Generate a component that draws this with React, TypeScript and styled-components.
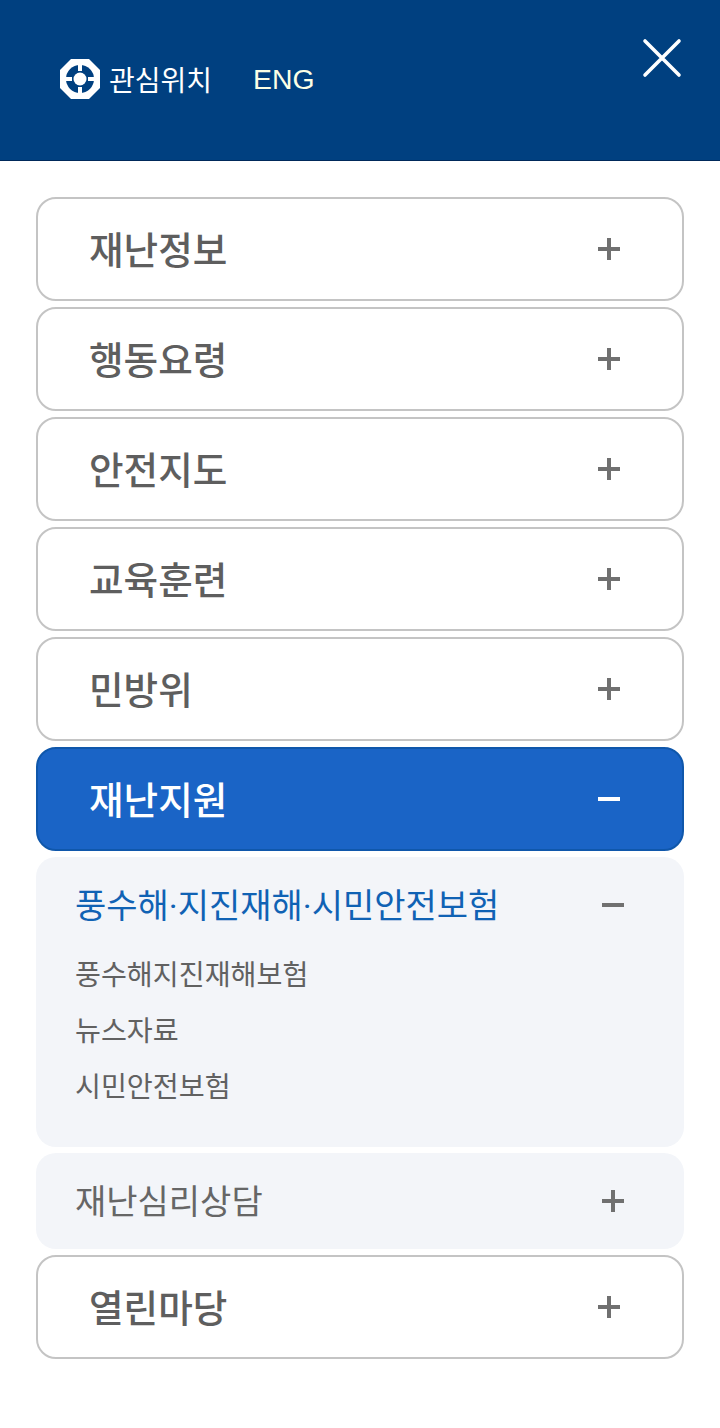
import styled, { createGlobalStyle } from 'styled-components';

const GlobalStyle = createGlobalStyle`
  html, body {
    margin: 0;
    padding: 0;
    background: #fff;
    font-family: 'Roboto', 'Noto Sans CJK KR', sans-serif;
  }
  * {
    box-sizing: border-box;
  }
`;

const Page = styled.div`
  width: 720px;
  height: 1428px;
  background: #fff;
`;

const Header = styled.header`
  height: 161px;
  background: #004080;
  border-bottom: 1px solid #00295a;
  display: flex;
  justify-content: space-between;
  align-items: flex-start;
  padding: 38px 38px 0 59px;
`;

const HeaderLinks = styled.div`
  display: flex;
  align-items: center;
  height: 44px;
  margin-top: 19px;
  color: #fff;
`;

const WatchLink = styled.a`
  display: flex;
  align-items: center;
  gap: 8px;
  font-size: 28px;
`;

const LangLink = styled.a`
  margin-left: 41px;
  font-family: 'Liberation Sans', sans-serif;
  font-size: 28.4px;
  color: #fbffe6;
`;

const CloseButton = styled.button`
  width: 40px;
  height: 40px;
  padding: 0;
  border: 0;
  background: none;
  display: block;
`;

const Menu = styled.nav`
  display: flex;
  flex-direction: column;
  gap: 6px;
  padding: 36px 36px 0;
`;

const MenuButton = styled.div<{ $active?: boolean }>`
  height: 104px;
  display: flex;
  align-items: center;
  justify-content: space-between;
  padding: 0 62px 4px 51px;
  border-radius: 20px;
  border: 2px solid ${({ $active }) => ($active ? '#0f57ab' : '#c4c4c4')};
  background: ${({ $active }) => ($active ? '#1a64c6' : '#fff')};
  color: ${({ $active }) => ($active ? '#fff' : '#5e5e5e')};
  font-size: 37.6px;
  font-weight: 500;
`;

const SubPanel = styled.div`
  background: #f3f5f9;
  border-radius: 20px;
  padding: 0 60px 0 39px;
`;

const SubHead = styled.div<{ $open?: boolean }>`
  display: flex;
  align-items: center;
  justify-content: space-between;
  height: 96px;
  padding-bottom: 4px;
  font-size: 34px;
  color: ${({ $open }) => ($open ? '#1062b4' : '#666')};
`;

const SubList = styled.ul`
  list-style: none;
  margin: 0;
  padding: 3px 0 39px;
  display: flex;
  flex-direction: column;
  gap: 16px;
`;

const SubItem = styled.li`
  height: 40px;
  line-height: 40px;
  font-size: 28.2px;
  color: #616161;
`;

const SignIcon = styled.svg`
  width: 22px;
  height: 22px;
  flex: none;
  display: block;
  margin-bottom: -4px;
`;

function Sign({ open, color }: { open?: boolean; color: string }) {
  return (
    <SignIcon viewBox="0 0 22 22">
      <rect x="0" y="9" width="22" height="4" fill={color} />
      {!open && <rect x="9" y="0" width="4" height="22" fill={color} />}
    </SignIcon>
  );
}

function WatchIcon() {
  return (
    <svg width="42" height="42" viewBox="0 0 42 42">
      <path d="M12 1h18l11 11v18L30 41H12L1 30V12z" fill="#fff" />
      <circle cx="21" cy="21" r="14" fill="#004080" />
      <circle cx="21" cy="21" r="6.5" fill="#fff" />
      <rect x="19" y="5" width="4" height="8" fill="#fff" />
      <rect x="19" y="29" width="4" height="8" fill="#fff" />
      <rect x="5" y="19" width="8" height="4" fill="#fff" />
      <rect x="29" y="19" width="8" height="4" fill="#fff" />
    </svg>
  );
}

const topMenus = ['재난정보', '행동요령', '안전지도', '교육훈련', '민방위'];
const subItems = ['풍수해지진재해보험', '뉴스자료', '시민안전보험'];

export default function App() {
  return (
    <Page>
      <GlobalStyle />
      <Header>
        <HeaderLinks>
          <WatchLink>
            <WatchIcon />
            관심위치
          </WatchLink>
          <LangLink>ENG</LangLink>
        </HeaderLinks>
        <CloseButton aria-label="닫기">
          <svg width="40" height="40" viewBox="0 0 40 40">
            <path d="M3 3l34 34M37 3L3 37" stroke="#fff" strokeWidth="3.6" strokeLinecap="round" />
          </svg>
        </CloseButton>
      </Header>
      <Menu>
        {topMenus.map(label => (
          <MenuButton key={label}>
            {label}
            <Sign color="#707070" />
          </MenuButton>
        ))}
        <MenuButton $active>
          재난지원
          <Sign open color="#fff" />
        </MenuButton>
        <SubPanel>
          <SubHead $open>
            풍수해·지진재해·시민안전보험
            <Sign open color="#707070" />
          </SubHead>
          <SubList>
            {subItems.map(item => (
              <SubItem key={item}>{item}</SubItem>
            ))}
          </SubList>
        </SubPanel>
        <SubPanel>
          <SubHead>
            재난심리상담
            <Sign color="#707070" />
          </SubHead>
        </SubPanel>
        <MenuButton>
          열린마당
          <Sign color="#707070" />
        </MenuButton>
      </Menu>
    </Page>
  );
}
